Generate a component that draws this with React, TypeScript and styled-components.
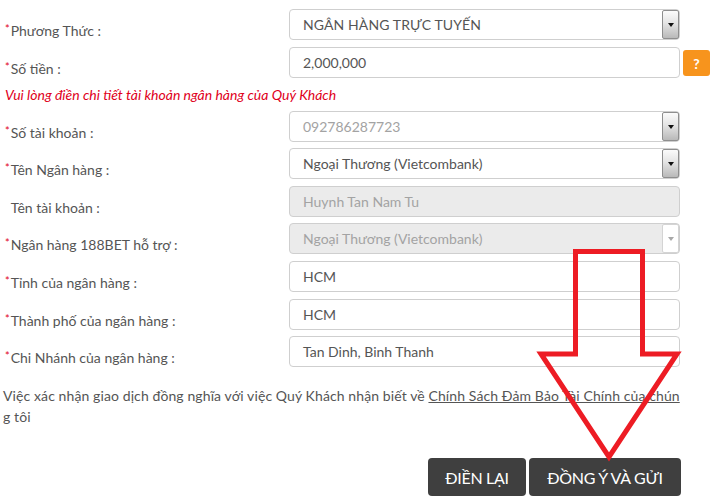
import React from "react";
import styled, { createGlobalStyle } from "styled-components";

const Global = createGlobalStyle`
  html, body { margin: 0; padding: 0; background: #fff; }
  body { font-family: Lato, "Open Sans", "Noto Sans", sans-serif; color: #555; }
  * { box-sizing: border-box; }
`;

const Page = styled.div`
  position: relative;
  width: 716px;
  height: 502px;
  padding: 9px 0 0 0;
  overflow: hidden;
`;

const Row = styled.div`
  display: grid;
  grid-template-columns: 284px 391px auto;
  align-items: start;
  padding-left: 5px;
  height: 31px;
  margin-bottom: 6.6px;
`;

const Label = styled.div`
  font-size: 14px;
  line-height: 20px;
  padding-top: 10px;
  color: #555;
  white-space: nowrap;
`;

const Star = styled.span<{ $hidden?: boolean }>`
  color: #e0001b;
  font-size: 11px;
  vertical-align: 3px;
  margin-right: 1px;
  visibility: ${(p) => (p.$hidden ? "hidden" : "visible")};
`;

const Field = styled.div<{ $disabled?: boolean; $muted?: boolean; $caps?: boolean }>`
  position: relative;
  height: 31px;
  border: 1px solid #cfcfcf;
  border-radius: 4px;
  background: ${(p) => (p.$disabled ? "#ebebeb" : "#fff")};
  color: ${(p) => (p.$disabled || p.$muted ? "#a3a3a3" : "#555")};
  font-size: 14px;
  line-height: 29px;
  padding-left: 13px;
  display: flex;
  align-items: center;
  justify-content: space-between;
  letter-spacing: ${(p) => (p.$caps ? "0.1px" : "0")};
`;

const DropButton = styled.div<{ $disabled?: boolean }>`
  align-self: stretch;
  width: 17px;
  border: 1px solid ${(p) => (p.$disabled ? "#d4d4d4" : "#8e8e8e")};
  border-radius: 2px;
  background: ${(p) =>
    p.$disabled ? "#fff" : "linear-gradient(to bottom, #fbfbfb 0%, #e4e4e4 45%, #b9b9b9 100%)"};
  display: flex;
  align-items: center;
  justify-content: center;
  &::after {
    content: "";
    display: block;
    margin-top: 1px;
    border-left: 3.5px solid transparent;
    border-right: 3.5px solid transparent;
    border-top: 4px solid ${(p) => (p.$disabled ? "#a8a8a8" : "#111")};
  }
`;

const HelpButton = styled.div`
  align-self: center;
  margin-left: 3px;
  margin-top: 1px;
  width: 27px;
  height: 26px;
  border-radius: 3px;
  background: #f7941d;
  color: #fff;
  font-weight: 700;
  font-size: 14px;
  display: flex;
  align-items: center;
  justify-content: center;
`;

const Notice = styled.div`
  padding-left: 5px;
  margin-top: 2px;
  margin-bottom: 4.4px;
  font-size: 14px;
  line-height: 22px;
  font-style: italic;
  color: #e0001b;
`;

const Terms = styled.p`
  margin: 18px 0 0 3px;
  width: 677px;
  font-size: 14px;
  line-height: 21px;
  letter-spacing: 0.1px;
  color: #555;
  word-break: break-all;
`;

const TermsLink = styled.a`
  color: #555;
  text-decoration: underline;
`;

const Actions = styled.div`
  display: flex;
  justify-content: flex-end;
  gap: 3px;
  width: 681px;
  margin-top: 31px;
`;

const ActionButton = styled.button<{ $w: number }>`
  width: ${(p) => p.$w}px;
  height: 38px;
  border: none;
  border-radius: 4px;
  background: #3f3f3f;
  color: #fff;
  font-family: Lato, "Open Sans", sans-serif;
  font-size: 16px;
  letter-spacing: -0.3px;
  padding: 0;
`;

const Overlay = styled.svg`
  position: absolute;
  left: 0;
  top: 0;
  pointer-events: none;
`;

type RowProps = {
  label: string;
  required?: boolean;
  children: React.ReactNode;
  extra?: React.ReactNode;
};

const FormRow = ({ label, required = true, children, extra }: RowProps) => (
  <Row>
    <Label>
      <Star $hidden={!required}>*</Star>
      {label}
    </Label>
    {children}
    {extra}
  </Row>
);

export default function App() {
  return (
    <>
      <Global />
      <Page>
        <FormRow label="Phương Thức :">
          <Field $caps>
            NGÂN HÀNG TRỰC TUYẾN
            <DropButton />
          </Field>
        </FormRow>
        <FormRow label="Số tiền :" extra={<HelpButton>?</HelpButton>}>
          <Field>2,000,000</Field>
        </FormRow>
        <Notice>Vui lòng điền chi tiết tài khoản ngân hàng của Quý Khách</Notice>
        <FormRow label="Số tài khoản :">
          <Field $muted>
            092786287723
            <DropButton />
          </Field>
        </FormRow>
        <FormRow label="Tên Ngân hàng :">
          <Field>
            Ngoại Thương (Vietcombank)
            <DropButton />
          </Field>
        </FormRow>
        <FormRow label="Tên tài khoản :" required={false}>
          <Field $disabled>Huynh Tan Nam Tu</Field>
        </FormRow>
        <FormRow label="Ngân hàng 188BET hỗ trợ :">
          <Field $disabled>
            Ngoại Thương (Vietcombank)
            <DropButton $disabled />
          </Field>
        </FormRow>
        <FormRow label="Tỉnh của ngân hàng :">
          <Field>HCM</Field>
        </FormRow>
        <FormRow label="Thành phố của ngân hàng :">
          <Field>HCM</Field>
        </FormRow>
        <FormRow label="Chi Nhánh của ngân hàng :">
          <Field>Tan Dinh, Binh Thanh</Field>
        </FormRow>
        <Terms>
          Việc xác nhận giao dịch đồng nghĩa với việc Quý Khách nhận biết về{" "}
          <TermsLink>Chính Sách Đảm Bảo Tài Chính của chún</TermsLink>g tôi
        </Terms>
        <Actions>
          <ActionButton $w={98}>ĐIỀN LẠI</ActionButton>
          <ActionButton $w={152}>ĐỒNG Ý VÀ GỬI</ActionButton>
        </Actions>
        <Overlay width="716" height="502" viewBox="0 0 716 502">
          <path
            d="M575.5 251.5 L642.5 251.5 L642.5 354 L677 354 L609 457 L541 354 L575.5 354 Z"
            fill="none"
            stroke="#ed1c24"
            strokeWidth="5"
            strokeLinejoin="miter"
          />
        </Overlay>
      </Page>
    </>
  );
}
